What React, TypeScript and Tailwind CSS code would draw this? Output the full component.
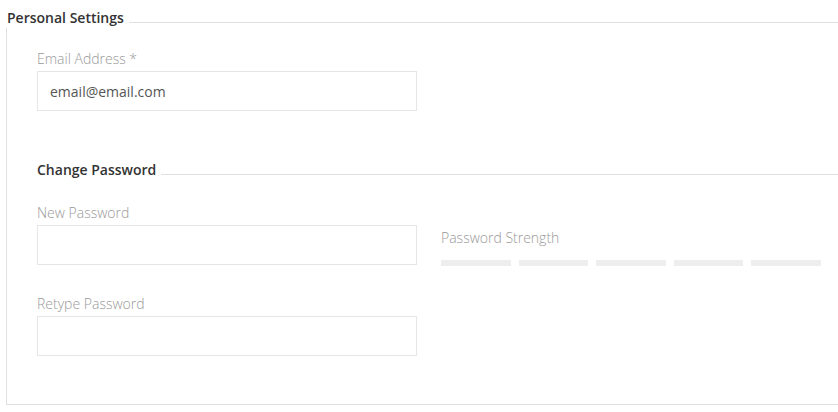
import React from 'react';

function Legend({ title, className = '' }: { title: string; className?: string }) {
    return (
        <div className={`flex items-end ${className}`}>
            <span className="text-[14px] leading-5 font-semibold text-[#333] whitespace-nowrap">{title}</span>
            <div className="flex-1 border-t border-[#e0e0e0] ml-[5px] mb-[5px]"></div>
        </div>
    );
}

function Field({ label, value = '', type = 'text' }: { label: string; value?: string; type?: string }) {
    return (
        <div className="flex flex-col">
            <label className="text-[14px] leading-5 font-light text-[#999] mb-[2px]">{label}</label>
            <input
                type={type}
                defaultValue={value}
                className="h-10 w-[380px] border border-[#e6e6e6] px-3 text-[14px] text-[#555] outline-none bg-white"
            />
        </div>
    );
}

export default function App() {
    const bars = [1, 2, 3, 4, 5];

    return (
        <div className="w-full min-h-screen bg-white overflow-hidden pt-2 pl-[7px]" style={{ fontFamily: '"Open Sans", "Liberation Sans", sans-serif' }}>
            <Legend title="Personal Settings" />
            <div className="-ml-px border-l border-b border-[#e0e0e0] pl-[30px] pt-[21px] pb-12">
                <Field label="Email Address *" value="email@email.com" />

                <Legend title="Change Password" className="mt-[49px]" />

                <div className="grid grid-cols-[380px_380px] gap-x-6 mt-[23px]">
                    <Field label="New Password" type="password" />
                    <div className="pt-[25px]">
                        <div className="text-[14px] leading-5 font-light text-[#999]">Password Strength</div>
                        <div className="flex gap-2 mt-3">
                            {bars.map(i => (
                                <div key={i} className="h-[6px] flex-1 bg-[#eeeeee]"></div>
                            ))}
                        </div>
                    </div>
                </div>

                <div className="mt-[28px]">
                    <Field label="Retype Password" type="password" />
                </div>
            </div>
        </div>
    );
}
